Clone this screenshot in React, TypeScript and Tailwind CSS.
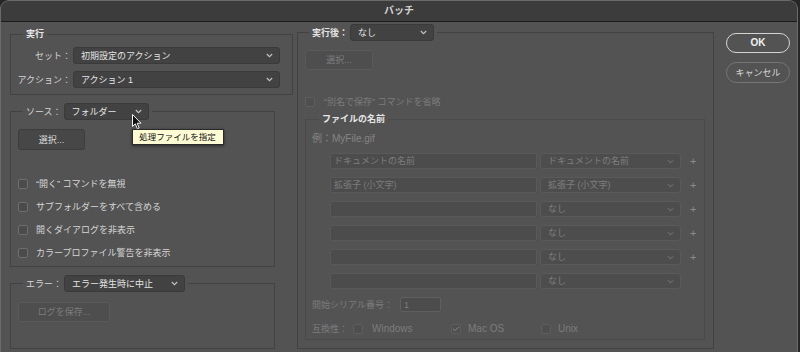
import { Check } from 'lucide-react';

const Chevron: React.FC<{ dim?: boolean }> = ({ dim }) => (
  <svg width="7" height="5" viewBox="0 0 7 5" className="shrink-0">
    <path d="M0.8 1 L3.5 3.7 L6.2 1" fill="none" stroke={dim ? '#686868' : '#c4c4c4'} strokeWidth="1.1" />
  </svg>
);

const Select: React.FC<{ w: string; text: string; disabled?: boolean; h?: string }> = ({ w, text, disabled, h = 'h-[17px]' }) => (
  <div
    className={`${w} ${h} flex items-center justify-between pl-[7px] pr-[6px] rounded-[3px] border ${
      disabled ? 'bg-[#4d4d4d] border-[#5a5a5a] text-[#7e7e7e]' : 'bg-[#424242] border-[#3a3a3a] text-[#e4e4e4]'
    }`}
  >
    <span className="truncate">{text}</span>
    <Chevron dim={disabled} />
  </div>
);

const Box: React.FC<{ disabled?: boolean; checked?: boolean }> = ({ disabled, checked }) => (
  <div
    className={`w-[10px] h-[10px] rounded-[2px] border flex items-center justify-center shrink-0 ${
      disabled ? 'bg-[#4f4f4f] border-[#5e5e5e]' : 'bg-[#4b4b4b] border-[#6e6e6e]'
    }`}
  >
    {checked && <Check size={8} strokeWidth={3} className="text-[#8c8c8c]" />}
  </div>
);

const CheckRow: React.FC<{ label: string }> = ({ label }) => (
  <div className="flex items-center gap-[8px] h-[14px] text-[#d6d6d6]">
    <Box />
    <span>{label}</span>
  </div>
);

const Cursor = () => (
  <svg width="10" height="16" viewBox="0 0 10 16" className="absolute left-[68px] top-[11px]">
    <path d="M0.5 0.5 L0.5 12.5 L3.3 9.8 L5.4 14.8 L7.2 14 L5.2 9.2 L9 9.2 Z" fill="#111" stroke="#f2f2f2" strokeWidth="1" strokeLinejoin="round" />
  </svg>
);

const nameRows = [
  { input: 'ドキュメントの名前', sel: 'ドキュメントの名前', plus: true },
  { input: '拡張子 (小文字)', sel: '拡張子 (小文字)', plus: true },
  { input: '', sel: 'なし', plus: true },
  { input: '', sel: 'なし', plus: true },
  { input: '', sel: 'なし', plus: true },
  { input: '', sel: 'なし', plus: false },
];

export default function App() {
  return (
    <div className="w-[800px] h-[352px] bg-[#262626] overflow-hidden font-['Liberation_Sans','Noto_Sans_CJK_JP',sans-serif] text-[9px] leading-[14px]">
      <div className="w-[798px] h-[352px] bg-[#535353] rounded-t-[9px] border-x border-t border-[#6a6a6a] overflow-hidden">
        {/* title bar */}
        <div className="h-[21px] bg-[#3c3c3c] border-b border-[#1c1c1c] flex items-center justify-center text-[10px] font-bold text-[#d2d2d2]">
          バッチ
        </div>

        <div className="flex items-start pl-[9px]">
          {/* left column */}
          <div className="w-[283px] flex flex-col mt-[5px]">
            <fieldset className="w-[283px] border border-[#424242] px-0 pt-[6px] pb-[6px]">
              <legend className="ml-[12px] px-[3px] text-[#e6e6e6] font-semibold">実行</legend>
              <div className="flex flex-col gap-[7px]">
                <div className="flex items-center">
                  <span className="w-[60px] text-right text-[#d2d2d2]">セット：</span>
                  <div className="ml-[2px]">
                    <Select w="w-[207px]" text="初期設定のアクション" />
                  </div>
                </div>
                <div className="flex items-center">
                  <span className="w-[60px] text-right text-[#d2d2d2]">アクション：</span>
                  <div className="ml-[2px]">
                    <Select w="w-[207px]" text="アクション 1" />
                  </div>
                </div>
              </div>
            </fieldset>

            <fieldset className="w-[265px] mt-[8px] border border-[#424242] pl-[7px] pt-[9px] pb-[6px]">
              <legend className="ml-[5px] px-[3px] flex items-center">
                <span className="text-[#d6d6d6] mr-[2px]">ソース：</span>
                <div className="relative">
                  <Select w="w-[85px]" text="フォルダー" />
                  <div className="absolute left-[68px] top-[26px] w-[92px] h-[16px] bg-[#fdfbd3] border border-[#2a2a2a] shadow-[0_1px_3px_rgba(0,0,0,0.5)] text-[#111] text-[8.5px] flex items-center justify-center whitespace-nowrap z-10">
                    処理ファイルを指定
                  </div>
                  <Cursor />
                </div>
              </legend>
              <div className="w-[67px] h-[21px] rounded-[3px] bg-[#474747] border border-[#3d3d3d] flex items-center justify-center text-[#d8d8d8]">
                選択...
              </div>
              <div className="mt-[27px] flex flex-col gap-[9px]">
                <CheckRow label="“開く” コマンドを無視" />
                <CheckRow label="サブフォルダーをすべて含める" />
                <CheckRow label="開くダイアログを非表示" />
                <CheckRow label="カラープロファイル警告を非表示" />
              </div>
            </fieldset>

            <fieldset className="w-[265px] h-[74px] mt-[8px] border border-[#424242] pl-[7px] pt-[10px]">
              <legend className="ml-[5px] px-[3px] flex items-center">
                <span className="text-[#d6d6d6] mr-[2px]">エラー：</span>
                <Select w="w-[121px]" text="エラー発生時に中止" />
              </legend>
              <div className="w-[92px] h-[20px] rounded-[3px] bg-[#4e4e4e] border border-[#5a5a5a] flex items-center justify-center text-[#7c7c7c]">
                ログを保存...
              </div>
            </fieldset>
          </div>

          {/* middle column */}
          <fieldset className="w-[417px] ml-[4px] mt-[2px] border border-[#424242] pl-[7px] pr-[8px] pt-[9px] pb-[8px]">
            <legend className="ml-[4px] px-[3px] flex items-center">
              <span className="text-[#e2e2e2] font-semibold mr-[2px]">実行後：</span>
              <Select w="w-[84px]" text="なし" />
            </legend>
            <div className="w-[68px] h-[20px] rounded-[3px] bg-[#4e4e4e] border border-[#5a5a5a] flex items-center justify-center text-[#7c7c7c]">
              選択...
            </div>
            <div className="mt-[25px] flex items-center gap-[9px] h-[14px] text-[#7c7c7c]">
              <Box disabled />
              <span>“別名で保存” コマンドを省略</span>
            </div>

            <fieldset className="w-[400px] mt-[3px] border border-[#4a4a4a] pl-[6px] pt-[6px] pb-[3px]">
              <legend className="ml-[7px] px-[3px] text-[#e6e6e6] font-semibold">ファイルの名前</legend>
              <div className="text-[#858585] text-[10px]">例：MyFile.gif</div>
              <div className="mt-[7px] pl-[18px] flex flex-col gap-[8px]">
                {nameRows.map((r, i) => (
                  <div key={i} className="flex items-center h-[16px]">
                    <div className="w-[207px] h-[16px] bg-[#4c4c4c] border border-[#595959] rounded-[2px] px-[3px] flex items-center text-[#7c7c7c]">
                      {r.input}
                    </div>
                    <div className="ml-[3px]">
                      <Select w="w-[141px]" h="h-[16px]" text={r.sel} disabled />
                    </div>
                    {r.plus && <span className="ml-[9px] text-[#8a8a8a] text-[11px]">+</span>}
                  </div>
                ))}
              </div>
              <div className="mt-[8px] flex items-center text-[#7c7c7c]">
                <span className="w-[88px]">開始シリアル番号：</span>
                <div className="w-[41px] h-[15px] bg-[#4c4c4c] border border-[#5f5f5f] rounded-[2px] px-[3px] flex items-center">
                  1
                </div>
              </div>
              <div className="mt-[10px] flex items-center h-[14px] text-[#7c7c7c]">
                <span className="w-[41px]">互換性：</span>
                <div className="w-[98px] flex items-center gap-[9px]">
                  <Box disabled />
                  <span className="text-[10px]">Windows</span>
                </div>
                <div className="w-[90px] flex items-center gap-[7px]">
                  <Box disabled checked />
                  <span className="text-[10px]">Mac OS</span>
                </div>
                <div className="flex items-center gap-[7px]">
                  <Box disabled />
                  <span className="text-[10px]">Unix</span>
                </div>
              </div>
            </fieldset>
          </fieldset>

          {/* buttons */}
          <div className="ml-[12px] mt-[11px] flex flex-col gap-[9px]">
            <div className="w-[64px] h-[20px] rounded-full border border-[#d4d4d4] flex items-center justify-center text-[10px] font-bold text-[#f0f0f0]">
              OK
            </div>
            <div className="w-[64px] h-[21px] rounded-full border border-[#767676] flex items-center justify-center text-[#d8d8d8]">
              キャンセル
            </div>
          </div>
        </div>
      </div>
    </div>
  );
}
